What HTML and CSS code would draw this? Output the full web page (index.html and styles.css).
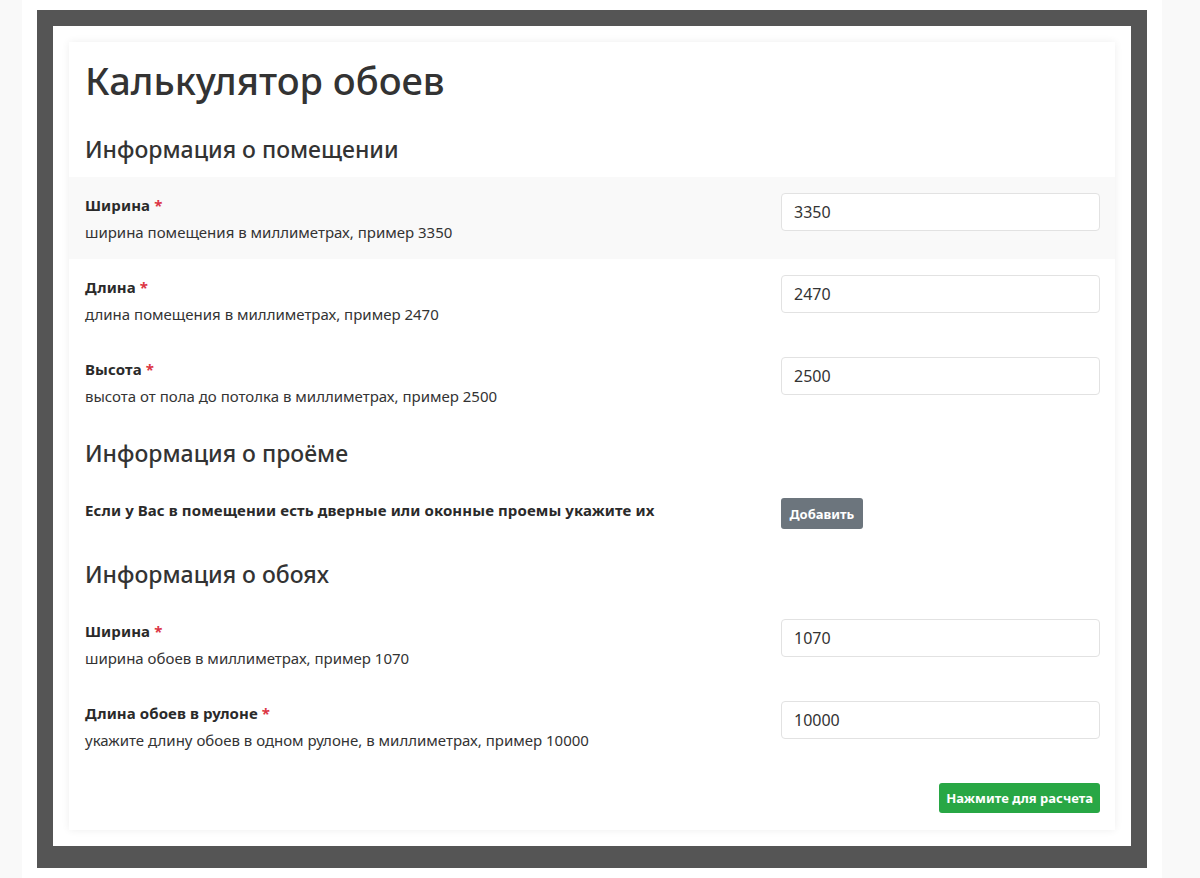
FILE: index.html
```html
<!DOCTYPE html>
<html lang="ru">
<head>
<meta charset="utf-8">
<title>Калькулятор обоев</title>
<link rel="stylesheet" href="styles.css">
</head>
<body>
<div class="page">
  <div class="frame">
    <div class="card">
      <h1 class="title">Калькулятор обоев</h1>

      <h4 class="section first">Информация о помещении</h4>
      <div class="row hover">
        <div class="info">
          <div class="label">Ширина <span class="req">*</span></div>
          <div class="desc">ширина помещения в миллиметрах, пример 3350</div>
        </div>
        <input class="field" type="text" value="3350">
      </div>
      <div class="row">
        <div class="info">
          <div class="label">Длина <span class="req">*</span></div>
          <div class="desc">длина помещения в миллиметрах, пример 2470</div>
        </div>
        <input class="field" type="text" value="2470">
      </div>
      <div class="row">
        <div class="info">
          <div class="label">Высота <span class="req">*</span></div>
          <div class="desc">высота от пола до потолка в миллиметрах, пример 2500</div>
        </div>
        <input class="field" type="text" value="2500">
      </div>

      <h4 class="section">Информация о проёме</h4>
      <div class="row compact">
        <div class="info">
          <div class="label">Если у Вас в помещении есть дверные или оконные проемы укажите их</div>
        </div>
        <div class="action"><button class="btn btn-gray" type="button">Добавить</button></div>
      </div>

      <h4 class="section">Информация о обоях</h4>
      <div class="row">
        <div class="info">
          <div class="label">Ширина <span class="req">*</span></div>
          <div class="desc">ширина обоев в миллиметрах, пример 1070</div>
        </div>
        <input class="field" type="text" value="1070">
      </div>
      <div class="row">
        <div class="info">
          <div class="label">Длина обоев в рулоне <span class="req">*</span></div>
          <div class="desc">укажите длину обоев в одном рулоне, в миллиметрах, пример 10000</div>
        </div>
        <input class="field" type="text" value="10000">
      </div>

      <div class="submit">
        <button class="btn btn-green" type="button">Нажмите для расчета</button>
      </div>
    </div>
  </div>
</div>
</body>
</html>
```

FILE: styles.css
```css
* { box-sizing: border-box; }

html, body {
  margin: 0;
  padding: 0;
}

body {
  background: #f9f9f9;
  font-family: "Noto Sans", "Open Sans", "DejaVu Sans", sans-serif;
  color: #333;
  height: 878px;
  overflow: hidden;
}

.page {
  width: 1140px;
  margin-left: 22px;
  background: #fff;
  padding: 10px 15px;
  height: 878px;
}

.frame {
  border: 16px solid #555;
  border-bottom-width: 22px;
  background: #fff;
  padding: 16px;
}

.card {
  background: #fff;
  box-shadow: 0 0 8px rgba(0, 0, 0, 0.07);
  padding: 14px 0 17px;
}

.title {
  margin: 0 16px;
  font-size: 38px;
  line-height: 48px;
  font-weight: 500;
  color: #333;
}

.section {
  margin: 15px 16px 14px;
  font-size: 23px;
  line-height: 30px;
  font-weight: 500;
  color: #333;
}

.section.first {
  margin-top: 30px;
  margin-bottom: 13px;
}

.row {
  display: grid;
  grid-template-columns: 1fr 319px;
  column-gap: 16px;
  align-items: start;
  padding: 16px 15px 16px 16px;
}

.row.compact {
  padding-bottom: 15px;
}

.row.hover {
  background: #f9f9f9;
}

.label {
  font-size: 15px;
  line-height: 24px;
  font-weight: 700;
  letter-spacing: 0.1px;
  color: #2a2a2a;
  margin-bottom: 4px;
}

.req {
  color: #dc3545;
}

.desc {
  font-size: 15px;
  line-height: 22px;
  color: #333;
}

.field {
  display: block;
  width: 319px;
  height: 38px;
  border: 1px solid #e2e2e2;
  border-radius: 4px;
  background: #fff;
  padding: 6px 12px;
  font-family: inherit;
  font-size: 16px;
  color: #333;
}

.btn {
  border: none;
  border-radius: 3px;
  color: #fff;
  font-family: inherit;
  font-weight: 700;
  font-size: 13px;
  cursor: pointer;
}

.btn-gray {
  background: #6c757d;
  height: 31px;
  padding: 0 8.5px;
}

.btn-green {
  background: #28a745;
  height: 30px;
  padding: 0 7px;
}

.submit {
  display: flex;
  justify-content: flex-end;
  padding: 16px 15px 0 16px;
}
```
